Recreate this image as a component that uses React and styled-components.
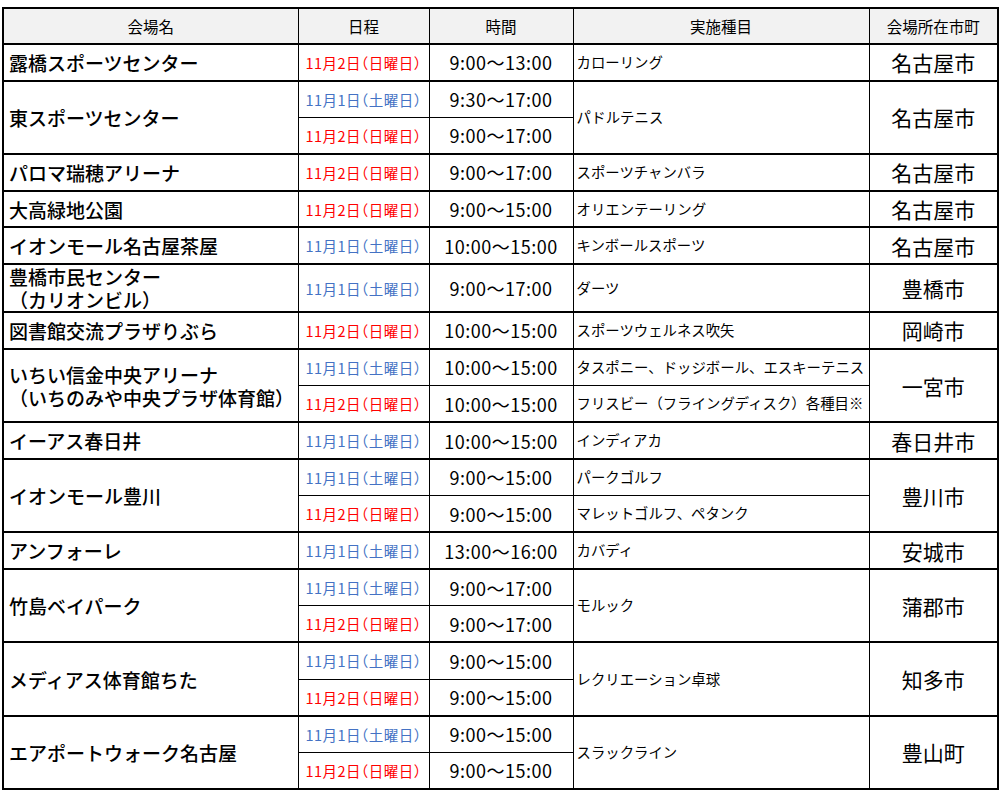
import styled, { createGlobalStyle } from "styled-components";

const GlobalStyle = createGlobalStyle`
  html, body {
    margin: 0;
    padding: 0;
    background: #fff;
  }
  body {
    font-family: "Noto Sans CJK JP", "Noto Sans", sans-serif;
    color: #000;
  }
`;

const Sheet = styled.table`
  border-collapse: collapse;
  table-layout: fixed;
  width: 995px;
  margin: 7px 0 0 2px;
  border: 2px solid #000;
  font-family: "Noto Sans CJK JP", "Noto Sans", sans-serif;
`;

const HeadRow = styled.tr`
  height: 36px;
  background: #f2f2f2;
`;

const HeadCell = styled.th`
  border: 1px solid #000;
  border-bottom: 2px solid #000;
  font-size: 15.5px;
  font-weight: 400;
  text-align: center;
  padding: 0;
`;

const Group = styled.tbody`
  border-top: 2px solid #000;
`;

const Row = styled.tr`
  height: ${(p) => (p.$tall ? "47px" : "36.7px")};
`;

const VenueCell = styled.td`
  border: 1px solid #000;
  padding: 0 0 0 5px;
  font-size: 19px;
  font-weight: 500;
  line-height: 23px;
  white-space: nowrap;
`;

const DateCell = styled.td`
  border: 1px solid #000;
  padding: 0;
  text-align: center;
  font-size: 14.5px;
  letter-spacing: 0.5px;
  font-feature-settings: "halt";
  color: ${(p) => (p.$day === "sun" ? "#ff0000" : "#4472c4")};
  white-space: nowrap;
`;

const TimeCell = styled.td`
  border: 1px solid #000;
  padding: 0;
  text-align: center;
  font-size: 18px;
  letter-spacing: 0.5px;
  white-space: nowrap;
`;

const SportCell = styled.td`
  border: 1px solid #000;
  padding: 0 0 2px 3px;
  font-size: 14.4px;
  white-space: nowrap;
  overflow: hidden;
`;

const CityCell = styled.td`
  border: 1px solid #000;
  padding: 0;
  text-align: center;
  font-size: 21px;
  white-space: nowrap;
`;

const SAT = "sat";
const SUN = "sun";

const dateLabel = {
  sat: "11月1日（土曜日）",
  sun: "11月2日（日曜日）",
};

const venues = [
  { name: ["露橋スポーツセンター"], city: "名古屋市", sessions: [{ day: SUN, time: "9:00～13:00" }], sports: ["カローリング"] },
  { name: ["東スポーツセンター"], city: "名古屋市", sessions: [{ day: SAT, time: "9:30～17:00" }, { day: SUN, time: "9:00～17:00" }], sports: ["パドルテニス"] },
  { name: ["パロマ瑞穂アリーナ"], city: "名古屋市", sessions: [{ day: SUN, time: "9:00～17:00" }], sports: ["スポーツチャンバラ"] },
  { name: ["大高緑地公園"], city: "名古屋市", sessions: [{ day: SUN, time: "9:00～15:00" }], sports: ["オリエンテーリング"] },
  { name: ["イオンモール名古屋茶屋"], city: "名古屋市", sessions: [{ day: SAT, time: "10:00～15:00" }], sports: ["キンボールスポーツ"] },
  { name: ["豊橋市民センター", "（カリオンビル）"], city: "豊橋市", tall: true, sessions: [{ day: SAT, time: "9:00～17:00" }], sports: ["ダーツ"] },
  { name: ["図書館交流プラザりぶら"], city: "岡崎市", sessions: [{ day: SUN, time: "10:00～15:00" }], sports: ["スポーツウェルネス吹矢"] },
  {
    name: ["いちい信金中央アリーナ", "（いちのみや中央プラザ体育館）"],
    city: "一宮市",
    sessions: [{ day: SAT, time: "10:00～15:00" }, { day: SUN, time: "10:00～15:00" }],
    sports: ["タスポニー、ドッジボール、エスキーテニス", "フリスビー（フライングディスク）各種目※"],
  },
  { name: ["イーアス春日井"], city: "春日井市", sessions: [{ day: SAT, time: "10:00～15:00" }], sports: ["インディアカ"] },
  {
    name: ["イオンモール豊川"],
    city: "豊川市",
    sessions: [{ day: SAT, time: "9:00～15:00" }, { day: SUN, time: "9:00～15:00" }],
    sports: ["パークゴルフ", "マレットゴルフ、ペタンク"],
  },
  { name: ["アンフォーレ"], city: "安城市", sessions: [{ day: SAT, time: "13:00～16:00" }], sports: ["カバディ"] },
  { name: ["竹島ベイパーク"], city: "蒲郡市", sessions: [{ day: SAT, time: "9:00～17:00" }, { day: SUN, time: "9:00～17:00" }], sports: ["モルック"] },
  { name: ["メディアス体育館ちた"], city: "知多市", sessions: [{ day: SAT, time: "9:00～15:00" }, { day: SUN, time: "9:00～15:00" }], sports: ["レクリエーション卓球"] },
  { name: ["エアポートウォーク名古屋"], city: "豊山町", sessions: [{ day: SAT, time: "9:00～15:00" }, { day: SUN, time: "9:00～15:00" }], sports: ["スラックライン"] },
];

function VenueGroup({ venue }) {
  const span = venue.sessions.length;
  const mergedSport = venue.sports.length === 1;

  return (
    <Group>
      {venue.sessions.map((s, i) => (
        <Row key={i} $tall={venue.tall}>
          {i === 0 && (
            <VenueCell rowSpan={span}>
              {venue.name.map((line, j) => (
                <div key={j}>{line}</div>
              ))}
            </VenueCell>
          )}
          <DateCell $day={s.day}>{dateLabel[s.day]}</DateCell>
          <TimeCell>{s.time}</TimeCell>
          {mergedSport ? (
            i === 0 && <SportCell rowSpan={span}>{venue.sports[0]}</SportCell>
          ) : (
            <SportCell>{venue.sports[i]}</SportCell>
          )}
          {i === 0 && <CityCell rowSpan={span}>{venue.city}</CityCell>}
        </Row>
      ))}
    </Group>
  );
}

export default function App() {
  return (
    <>
      <GlobalStyle />
      <Sheet>
        <colgroup>
          <col style={{ width: 295 }} />
          <col style={{ width: 131 }} />
          <col style={{ width: 144 }} />
          <col style={{ width: 296 }} />
          <col style={{ width: 129 }} />
        </colgroup>
        <thead>
          <HeadRow>
            <HeadCell>会場名</HeadCell>
            <HeadCell>日程</HeadCell>
            <HeadCell>時間</HeadCell>
            <HeadCell>実施種目</HeadCell>
            <HeadCell>会場所在市町</HeadCell>
          </HeadRow>
        </thead>
        {venues.map((v) => (
          <VenueGroup key={v.name[0]} venue={v} />
        ))}
      </Sheet>
    </>
  );
}
